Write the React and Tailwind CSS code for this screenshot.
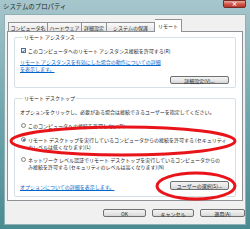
const jp = "font-['Noto_Sans_CJK_JP','Noto_Sans_CJK_SC',sans-serif]";

function Btn({ children, className = "" }) {
  return (
    <div
      className={`flex items-center justify-center h-[8px] border border-[#707070] rounded-[2px] bg-gradient-to-b from-[#f3f3f3] via-[#e8e8e8] to-[#d6d6d6] text-[5px] leading-[5px] text-[#222] ${className}`}
    >
      {children}
    </div>
  );
}

function Radio({ checked }) {
  return (
    <div className="mt-[1px] w-[5px] h-[5px] shrink-0 rounded-full border border-[#8a8a8a] bg-[#f4f4f4] flex items-center justify-center">
      {checked && <div className="w-[2px] h-[2px] rounded-full bg-[#1d5fa8]" />}
    </div>
  );
}

export default function App() {
  return (
    <div className={`relative w-[250px] h-[229px] overflow-hidden flex flex-col bg-gradient-to-b from-[#a6c6cc] via-[#6fa6ad] to-[#4a8b92] ${jp}`}>
      {/* title bar */}
      <div className="relative h-[14px] shrink-0">
        <div className="pl-[3px] pt-[3px] text-[6.4px] leading-[8px] text-[#1b2a2c]">システムのプロパティ</div>
        <div className="absolute right-[4px] top-0 w-[23px] h-[8px] rounded-b-[2px] border border-[#7a2a24] bg-gradient-to-b from-[#e9a89e] via-[#d2584c] to-[#b8362c] flex items-center justify-center text-white text-[6px] leading-[6px] font-bold">
          ×
        </div>
      </div>

      {/* body */}
      <div className="flex-1 px-[4px] pb-[4px]">
        <div className="h-full bg-[#f0f0f0] flex flex-col border border-[#8fb0b5]">
          {/* tabs */}
          <div className="flex items-end pl-[3px] pt-[3px] h-[16px] text-[5px] leading-[5px] text-[#222]">
            <div className="w-[40px] h-[9px] border border-[#8e9196] border-b-0 bg-gradient-to-b from-[#fafafa] to-[#e3e3e3] flex items-center justify-center">コンピュータ名</div>
            <div className="w-[34px] h-[9px] border border-[#8e9196] border-b-0 border-l-0 bg-gradient-to-b from-[#fafafa] to-[#e3e3e3] flex items-center justify-center">ハードウェア</div>
            <div className="w-[25px] h-[9px] border border-[#8e9196] border-b-0 border-l-0 bg-gradient-to-b from-[#fafafa] to-[#e3e3e3] flex items-center justify-center">詳細設定</div>
            <div className="w-[48px] h-[9px] border border-[#8e9196] border-b-0 border-l-0 bg-gradient-to-b from-[#fafafa] to-[#e3e3e3] flex items-center justify-center">システムの保護</div>
            <div className="relative z-10 -mb-px w-[27px] h-[13px] border border-[#8e9196] border-b-0 border-l-0 bg-white flex items-start pt-[3px] justify-center">リモート</div>
          </div>

          {/* panel */}
          <div className="mx-[2px] border border-[#8e9196] bg-white px-[6px] pt-[2px] pb-[3px] text-[5px] leading-[7px] text-[#222]">
            <fieldset className="border border-[#d5dfe5] rounded-[2px] px-[5px] pb-[3px] flex flex-col">
              <legend className="ml-[3px] px-[1px] leading-[6px]">リモート アシスタンス</legend>
              <div className="mt-[7px] flex items-center gap-[2px] pl-[1px]">
                <div className="w-[5px] h-[5px] border border-[#4a6f9a] bg-[#eef3f8] flex items-center justify-center">
                  <svg width="4" height="4" viewBox="0 0 4 4">
                    <path d="M0.5 2 L1.6 3.2 L3.6 0.6" stroke="#1d4f8a" strokeWidth="0.9" fill="none" />
                  </svg>
                </div>
                <span>このコンピュータへのリモート アシスタンス接続を許可する(R)</span>
              </div>
              <div className="mt-[4px] text-[#0066cc] underline decoration-[0.5px]">
                リモート アシスタンスを有効にした場合の動作についての詳細
                <br />
                を表示します。
              </div>
              <Btn className="mt-[4px] self-end mr-[1px] w-[59px]">詳細設定(V)...</Btn>
            </fieldset>

            <fieldset className="mt-[7px] border border-[#d5dfe5] rounded-[2px] px-[5px] pb-[6px] flex flex-col">
              <legend className="ml-[3px] px-[1px] leading-[6px]">リモート デスクトップ</legend>
              <div className="mt-[7px]">オプションをクリックし、必要がある場合は接続できるユーザーを指定してください。</div>
              <div className="mt-[7px] flex gap-[2px] pl-[1px]">
                <Radio />
                <span>このコンピュータへの接続を許可しない(D)</span>
              </div>
              <div className="mt-[7px] flex gap-[2px] pl-[1px]">
                <Radio checked />
                <span>
                  リモート デスクトップを実行しているコンピュータからの接続を許可する (セキュリティ
                  <br />
                  のレベルは低くなります)(L)
                </span>
              </div>
              <div className="mt-[6px] flex gap-[2px] pl-[1px]">
                <Radio />
                <span>
                  ネットワーク レベル認証でリモート デスクトップを実行しているコンピュータからの
                  <br />
                  み接続を許可する (セキュリティのレベルは高くなります)(N)
                </span>
              </div>
              <div className="mt-[11px] flex items-end justify-between">
                <span className="text-[#0066cc] underline decoration-[0.5px]">オプションについての詳細を表示します。</span>
                <Btn className="mr-[1px] w-[59px] h-[9px]">ユーザーの選択(S)...</Btn>
              </div>
            </fieldset>
          </div>

          {/* bottom buttons */}
          <div className="mt-[8px] flex justify-end gap-[6px] pr-0">
            <Btn className="w-[43px]">OK</Btn>
            <Btn className="w-[42px]">キャンセル</Btn>
            <Btn className="w-[45px]">適用(A)</Btn>
          </div>
        </div>
      </div>

      {/* red annotation ellipses */}
      <svg className="absolute left-0 top-0 pointer-events-none" width="250" height="229" viewBox="0 0 250 229">
        <ellipse cx="123" cy="141" rx="112" ry="14" fill="none" stroke="#e8141a" strokeWidth="3" />
        <ellipse cx="196" cy="186" rx="39" ry="13" fill="none" stroke="#e8141a" strokeWidth="3" />
      </svg>
    </div>
  );
}
